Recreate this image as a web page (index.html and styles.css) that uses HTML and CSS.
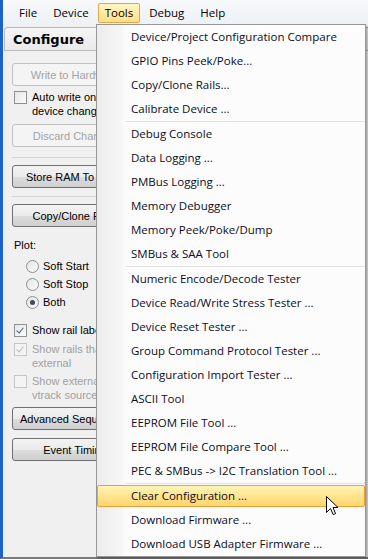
FILE: index.html
```html
<!DOCTYPE html>
<html lang="en">
<head>
    <meta charset="UTF-8">
    <meta name="viewport" content="width=device-width, initial-scale=1.0">
    <title>Tools menu</title>
    <link rel="stylesheet" href="styles.css">
</head>
<body>
    <div class="window">
        <div class="menubar">
            <span class="menubar-item">File</span>
            <span class="menubar-item">Device</span>
            <span class="menubar-item open">Tools</span>
            <span class="menubar-item">Debug</span>
            <span class="menubar-item">Help</span>
        </div>

        <div class="panel">
            <div class="panel-head">Configure</div>
            <div class="panel-body">
                <button class="btn btn-write" disabled>Write to Hardware</button>
                <label class="check check-auto">
                    <span class="box"></span>
                    <span>Auto write on<br>device change</span>
                </label>
                <button class="btn btn-discard" disabled>Discard Changes</button>
                <div class="rule rule-1"></div>
                <button class="btn btn-store">Store RAM To Flash</button>
                <div class="rule rule-2"></div>
                <button class="btn btn-copy">Copy/Clone Rails</button>

                <div class="plot-label">Plot:</div>
                <div class="radios">
                    <label class="radio"><span class="dot"></span>Soft Start</label>
                    <label class="radio"><span class="dot"></span>Soft Stop</label>
                    <label class="radio"><span class="dot on"></span>Both</label>
                </div>

                <label class="check check-labels">
                    <span class="box ticked"></span>
                    <span>Show rail labels</span>
                </label>
                <label class="check check-rails disabled">
                    <span class="box ticked"></span>
                    <span>Show rails that are<br>external</span>
                </label>
                <label class="check check-vtrack disabled">
                    <span class="box"></span>
                    <span>Show external<br>vtrack sources</span>
                </label>

                <button class="btn btn-adv">Advanced Sequencing</button>
                <button class="btn btn-event">Event Timing</button>
            </div>
        </div>

        <!-- drop-down of the Tools menu -->
        <div class="menu">
            <div class="item">Device/Project Configuration Compare</div>
            <div class="item">GPIO Pins Peek/Poke...</div>
            <div class="item">Copy/Clone Rails...</div>
            <div class="item">Calibrate Device ...</div>
            <div class="sep"></div>
            <div class="item">Debug Console</div>
            <div class="item">Data Logging ...</div>
            <div class="item">PMBus Logging ...</div>
            <div class="item">Memory Debugger</div>
            <div class="item">Memory Peek/Poke/Dump</div>
            <div class="item">SMBus &amp; SAA Tool</div>
            <div class="sep"></div>
            <div class="item">Numeric Encode/Decode Tester</div>
            <div class="item">Device Read/Write Stress Tester ...</div>
            <div class="item">Device Reset Tester ...</div>
            <div class="item">Group Command Protocol Tester ...</div>
            <div class="item">Configuration Import Tester ...</div>
            <div class="item">ASCII Tool</div>
            <div class="item">EEPROM File Tool ...</div>
            <div class="item">EEPROM File Compare Tool ...</div>
            <div class="item">PEC &amp; SMBus -&gt; I2C Translation Tool ...</div>
            <div class="sep"></div>
            <div class="item active">Clear Configuration ...</div>
            <div class="item">Download Firmware ...</div>
            <div class="item">Download USB Adapter Firmware ...</div>
        </div>

        <svg class="cursor" width="13" height="20" viewBox="0 0 13 20">
            <path d="M0.5 0.5 L0.5 16.5 L4.5 12.5 L7.2 18.6 L9.6 17.6 L7 11.5 L12 11.5 Z" fill="#fff" stroke="#000" stroke-width="1" stroke-linejoin="miter"/>
        </svg>
    </div>
</body>
</html>
```

FILE: styles.css
```css
html, body {
    margin: 0;
    padding: 0;
}
body {
    width: 368px;
    height: 559px;
    overflow: hidden;
    background-color: #f0f0f0;
    font-family: 'Liberation Sans', Arial, sans-serif;
    font-size: 11px;
    color: #000;
}
.window {
    position: relative;
    height: 557px;
    border-left: 3px solid #1d63c7;
    border-bottom: 2px solid #7a7a7a;
    display: flex;
    flex-direction: column;
}

/* menu bar */
.menubar {
    height: 24px;
    display: flex;
    align-items: center;
    padding-left: 9px;
    gap: 2px;
    background: linear-gradient(#f7f9fb, #eef1f5);
    font-family: 'Open Sans', 'Noto Sans', sans-serif;
    font-size: 11.5px;
}
.menubar-item {
    box-sizing: border-box;
    height: 20px;
    line-height: 18px;
    padding: 0 6px;
    border: 1px solid transparent;
    margin-top: 2px;
}
.menubar-item.open {
    border-color: #e3a64a;
    border-radius: 2px;
    background: linear-gradient(#fff5c4, #ffdf84);
}

/* Configure panel */
.panel {
    flex: 1;
    margin-left: 1px;
    padding-top: 3px;
}
.panel-head {
    box-sizing: border-box;
    height: 24px;
    line-height: 23px;
    padding-left: 8px;
    border: 1px solid #b9b9b9;
    border-right: none;
    border-top-left-radius: 4px;
    background: linear-gradient(#f6f6f6, #e9e9e9);
    font-family: Tahoma, 'DejaVu Sans', sans-serif;
    font-weight: bold;
    font-size: 13px;
}
.panel-body {
    display: flex;
    flex-direction: column;
    align-items: flex-start;
    padding-left: 8px;
}
.btn {
    box-sizing: border-box;
    width: 126px;
    height: 23px;
    margin: 0;
    padding: 0;
    border: 1px solid #707070;
    border-radius: 3px;
    background: linear-gradient(#f3f3f3 0%, #ebebeb 50%, #dddddd 51%, #cfcfcf 100%);
    font-family: 'Liberation Sans', Arial, sans-serif;
    font-size: 11px;
    color: #000;
    text-align: center;
}
.btn:disabled {
    border-color: #c2c2c2;
    background: #f4f4f4;
    color: #a3a3a3;
}
.btn-write { margin-top: 12px; }
.btn-discard { margin-top: 6px; }
.btn-store { margin-top: 7px; }
.btn-copy { margin-top: 7px; }
.btn-adv { margin-top: 5px; }
.btn-event { margin-top: 8px; }

.rule {
    width: 130px;
    height: 1px;
    background-color: #d5d5d5;
}
.rule-1 { margin-top: 10px; }
.rule-2 { margin-top: 8px; }

.check {
    display: flex;
    align-items: flex-start;
    gap: 5px;
    line-height: 14px;
    padding-left: 2px;
    white-space: nowrap;
}
.check.disabled {
    color: #a0a0a0;
}
.check-auto { margin-top: 4px; }
.check-labels { margin-top: 12px; }
.check-rails { margin-top: 5px; }
.check-vtrack { margin-top: 4px; }

.box {
    box-sizing: border-box;
    flex: none;
    width: 13px;
    height: 13px;
    margin-top: 1px;
    border: 1px solid #8e8f8f;
    background: linear-gradient(135deg, #e6e6e6, #fbfbfb);
    position: relative;
}
.check.disabled .box {
    border-color: #c6c6c6;
    background: #f4f4f4;
}
.box.ticked::after {
    content: '';
    position: absolute;
    left: 3px;
    top: 1px;
    width: 3px;
    height: 6px;
    border: solid #4a5f80;
    border-width: 0 1.5px 1.5px 0;
    transform: rotate(40deg);
}
.check.disabled .box.ticked::after {
    border-color: #b9b9b9;
}

.plot-label {
    margin-top: 11px;
    line-height: 14px;
    padding-left: 2px;
}
.radios {
    margin-top: 5px;
    padding-left: 14px;
    display: flex;
    flex-direction: column;
}
.radio {
    height: 18px;
    display: flex;
    align-items: center;
    gap: 4px;
}
.dot {
    box-sizing: border-box;
    width: 13px;
    height: 13px;
    border-radius: 50%;
    border: 1px solid #8e8f8f;
    background: linear-gradient(135deg, #e4e4e4, #fdfdfd);
    position: relative;
}
.dot.on::after {
    content: '';
    position: absolute;
    left: 3px;
    top: 3px;
    width: 5px;
    height: 5px;
    border-radius: 50%;
    background-color: #404a5a;
}

/* Tools drop-down */
.menu {
    position: absolute;
    left: 93px;
    top: 24px;
    width: 268px;
    border: 1px solid #979797;
    background: linear-gradient(to right, #ececec 0, #f6f6f6 24px, #fcfcfc 28px);
    box-shadow: 2px 2px 2px rgba(0, 0, 0, 0.3);
    font-family: 'Open Sans', 'Noto Sans', sans-serif;
    font-size: 11.5px;
    color: #0c0c1e;
}
.item {
    box-sizing: border-box;
    height: 24px;
    line-height: 23px;
    padding-left: 34px;
    white-space: nowrap;
}
.item.active {
    height: 22px;
    line-height: 20px;
    margin: 1px 0;
    padding-left: 33px;
    border: 1px solid #e5a13a;
    border-radius: 2px;
    background: linear-gradient(#fff4b6, #ffd56a);
}
.sep {
    height: 1px;
    margin-left: 28px;
    background-color: #e2e2e2;
}

.cursor {
    position: absolute;
    left: 323px;
    top: 496px;
}
```
